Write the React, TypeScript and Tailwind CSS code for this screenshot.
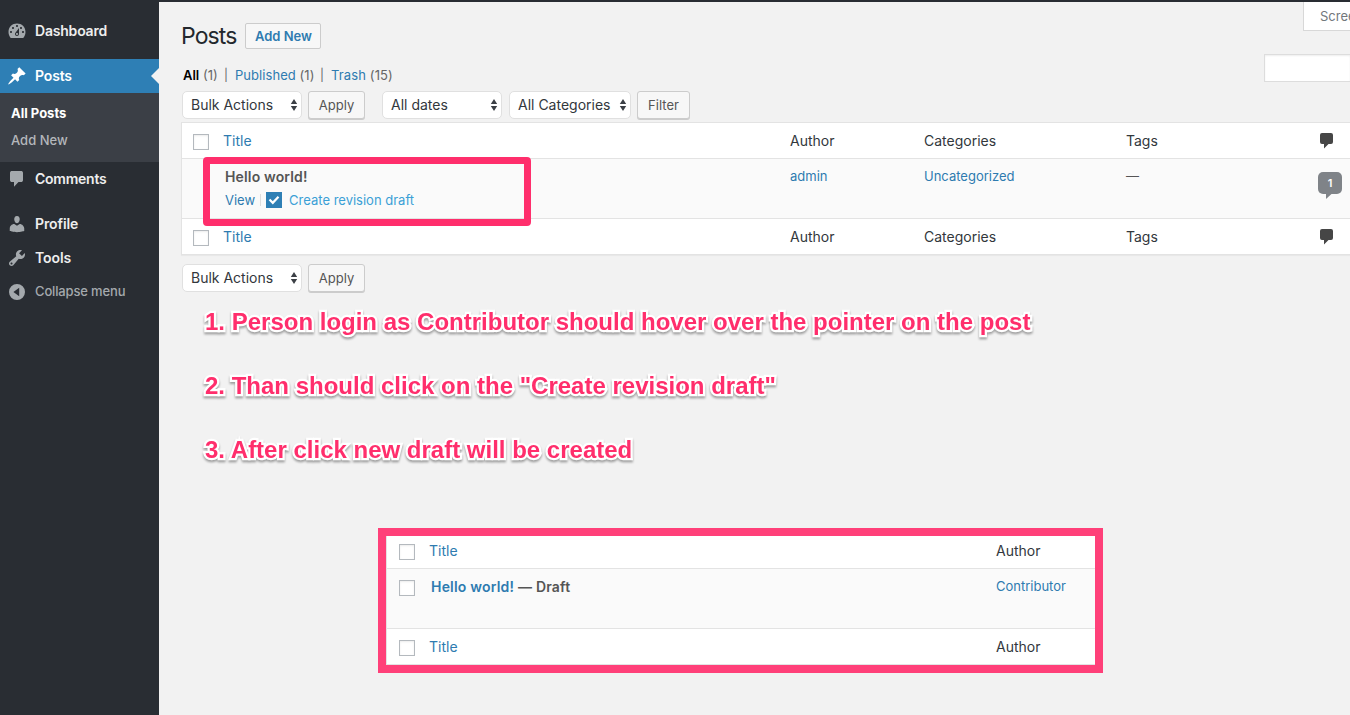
import React from "react";

const ICONS = {
  dashboard:
    "M3.76 17h12.48c1.34-1.54 2.26-3.56 2.26-6 0-5.2-3.8-8.5-8.5-8.5S1.5 5.8 1.5 11c0 2.44.92 4.46 2.26 6zM10 4c.55 0 1 .45 1 1s-.45 1-1 1-1-.45-1-1 .45-1 1-1zM6 6c.55 0 1 .45 1 1s-.45 1-1 1-1-.45-1-1 .45-1 1-1zm8 0c.55 0 1 .45 1 1s-.45 1-1 1-1-.45-1-1 .45-1 1-1zm-5.37 5.55L12 7v6c0 1.1-.9 2-2 2s-2-.9-2-2c0-.57.24-1.08.63-1.45zM4 10c.55 0 1 .45 1 1s-.45 1-1 1-1-.45-1-1 .45-1 1-1zm12 0c.55 0 1 .45 1 1s-.45 1-1 1-1-.45-1-1 .45-1 1-1zm-5 3c0-.55-.45-1-1-1s-1 .45-1 1 .45 1 1 1 1-.45 1-1z",
  pin: "M10.44 3.02l1.82-1.82 6.36 6.35-1.83 1.82c-1.05-.68-2.48-.57-3.41.36l-.75.75c-.92.93-1.04 2.35-.35 3.41l-1.83 1.82-2.41-2.41-2.8 2.79c-.42.42-3.38 2.71-3.8 2.29s1.86-3.39 2.28-3.81l2.79-2.79L4.1 9.36l1.83-1.82c1.05.69 2.48.57 3.4-.36l.75-.75c.93-.92 1.05-2.35.36-3.41z",
  comment: "M5 2h9c1.1 0 2 .6 2 2v7c0 1.4-.9 2-2 2h-2.500L7 17.800V13H5c-1.100 0-2-.6-2-2V4c0-1.400.9-2 2-2z",
  user: "M10 9.25c-2.27 0-2.73-3.44-2.73-3.44C7 4.02 7.82 2 9.97 2c2.16 0 2.98 2.02 2.71 3.81 0 0-.41 3.44-2.68 3.44zm0 2.57L12.72 10c2.39 0 4.52 2.33 4.52 4.53v2.49s-3.65 1.13-7.24 1.13c-3.65 0-7.24-1.13-7.24-1.13v-2.49c0-2.25 1.94-4.48 4.47-4.48z",
  wrench:
    "M16.68 9.77c-1.34 1.34-3.3 1.67-4.95.99l-5.41 6.52c-.99.99-2.59.99-3.58 0s-.99-2.59 0-3.57l6.52-5.42c-.68-1.65-.35-3.61.99-4.95 1.28-1.28 3.12-1.62 4.72-1.06l-2.89 2.89 2.82 2.82 2.86-2.87c.53 1.58.18 3.39-1.08 4.65zM3.81 16.21c.4.39 1.04.39 1.43 0 .4-.4.4-1.04 0-1.43-.39-.4-1.03-.4-1.43 0-.39.39-.39 1.03 0 1.43z",
  collapse: "M10 2a8 8 0 1 0 0 16 8 8 0 0 0 0-16zM12.200 5.800v8.400L6.400 10z",
};

function Icon({ d, className }: { d: string; className: string }) {
  return (
    <svg viewBox="0 0 20 20" className={className} fill="currentColor" fillRule="evenodd">
      <path d={d} />
    </svg>
  );
}

function MenuItem({ icon, label, className }: { icon: string; label: string; className: string }) {
  return (
    <div className={`flex h-[34px] items-center gap-2 pl-[7px] ${className}`}>
      <Icon d={icon} className="size-5 shrink-0" />
      <span className="pb-[2px]">{label}</span>
    </div>
  );
}

function Sidebar() {
  return (
    <aside className="w-[159px] shrink-0 bg-[#292d33] pt-[14px] text-[#a4a9ad]">
      <MenuItem icon={ICONS.dashboard} label="Dashboard" className="text-[14px] font-semibold tracking-[-0.2px] [&>span]:text-[#eee]" />
      <div className="relative mt-[11px] bg-[#2e7fb5] text-white">
        <MenuItem icon={ICONS.pin} label="Posts" className="text-[14px] font-semibold tracking-[-0.15px]" />
        <div className="absolute top-[9px] right-0 border-y-8 border-r-8 border-y-transparent border-r-[#f2f2f2]" />
      </div>
      <div className="flex h-[69px] flex-col bg-[#3b3f46] pt-[7px] pl-[11px] text-[13px] leading-[27px]">
        <span className="font-bold text-white">All Posts</span>
        <span className="font-medium text-[#b4b7bb]">Add New</span>
      </div>
      <MenuItem icon={ICONS.comment} label="Comments" className="text-[14px] font-semibold tracking-[-0.25px] [&>span]:text-[#eee]" />
      <MenuItem icon={ICONS.user} label="Profile" className="mt-[11px] text-[14px] font-semibold tracking-[-0.1px] [&>span]:text-[#eee]" />
      <MenuItem icon={ICONS.wrench} label="Tools" className="text-[14px] font-semibold tracking-[-0.1px] [&>span]:text-[#eee]" />
      <MenuItem icon={ICONS.collapse} label="Collapse menu" className="text-[13px] font-medium tracking-[-0.15px] [&>span]:pb-0" />
    </aside>
  );
}

function Select({ label, className }: { label: string; className: string }) {
  return (
    <div className={`flex h-7 items-center justify-between rounded-[5px] border border-[#e0e0e0] bg-white pr-[3px] pl-2 text-[14px] tracking-[0px] text-[#32373c] ${className}`}>
      <span className="pb-[2px]">{label}</span>
      <svg viewBox="0 0 8 14" className="h-3.5 w-2" fill="#3c4046">
        <path d="M4 1l3.200 5H.8zM4 13L.8 8h6.400z" />
      </svg>
    </div>
  );
}

function Button({ label, className }: { label: string; className: string }) {
  return (
    <div className={`flex h-7 items-center justify-center rounded-[3px] border border-[#ccc] bg-[#f7f7f7] pt-[2px] text-[13px] text-[#555] shadow-[0_1px_0_#ccc] ${className}`}>
      {label}
    </div>
  );
}

function Box() {
  return <span className="size-4 shrink-0 border border-[#b4b9be] bg-white shadow-[inset_0_1px_2px_rgba(0,0,0,0.08)]" />;
}

function Bubble() {
  return (
    <svg viewBox="0 0 13 16" className="h-4 w-[13px]" fill="#464646">
      <path d="M2 0h9q2 0 2 2v7q0 2-2 2H8.500L4 15.500V11H2Q0 11 0 9V2Q0 0 2 0z" />
    </svg>
  );
}

const COLS = "grid grid-cols-[41px_567px_134px_202px_194px_1fr]";

function HeadRow() {
  return (
    <div className={`${COLS} h-[35px] text-[14px] leading-[35px] text-[#32373c]`}>
      <div className="pt-[11px] pl-[11px]"><div className="flex"><Box /></div></div>
      <span className="text-[#2e7bb0]">Title</span>
      <span>Author</span>
      <span>Categories</span>
      <span>Tags</span>
      <div className="pt-[10px]"><Bubble /></div>
    </div>
  );
}

function PostsTable() {
  return (
    <section className="relative mt-[2px] border border-r-0 border-[#e3e3e3] bg-white shadow-[0_1px_1px_rgba(0,0,0,0.04)]">
      <HeadRow />
      <div className={`${COLS} h-[61px] border-y border-[#e3e3e3] bg-[#fafafa] text-[13px] leading-5 text-[#2e7bb0]`}>
        <span />
        <div className="pt-2 pl-[2px]">
          <div className="text-[14px] leading-5 font-semibold tracking-[0.15px] text-[#555]">Hello world!</div>
          <div className="mt-[3px] flex items-center">
            <span>View</span>
            <span className="ml-[5px] h-3 w-px bg-[#ddd]" />
            <span className="ml-[5px] flex size-4 items-center justify-center bg-[#2e7fb5]">
              <svg viewBox="0 0 16 16" className="size-4" fill="none" stroke="#fff" strokeWidth="2.2">
                <path d="M3.500 7.500l3.300 3.300 5.700-6" />
              </svg>
            </span>
            <span className="ml-[7px] text-[#3ba0d6]">Create revision draft</span>
          </div>
        </div>
        <span className="pt-[7px]">admin</span>
        <span className="pt-[7px]">Uncategorized</span>
        <span className="pt-[7px] text-[#555]">—</span>
        <div className="-ml-[2px] pt-[13px]">
          <div className="relative flex h-[22px] w-6 items-center justify-center rounded-[5px] bg-[#7f8388] text-[11px] font-semibold text-white">
            1
            <svg viewBox="0 0 6 5" className="absolute top-[22px] left-2 h-[5px] w-[6px]" fill="#7f8388">
              <path d="M0 0h5.500L0 5z" />
            </svg>
          </div>
        </div>
      </div>
      <HeadRow />
      <div className="absolute top-[34px] left-[21px] h-[69px] w-[328px] rounded-[4px] border-[7px] border-[#ff2e6c]" />
    </section>
  );
}

function DraftTable() {
  const cols = "grid grid-cols-[42px_567px_1fr]";
  const head = (
    <div className={`${cols} h-8 text-[14px] leading-[30px] text-[#32373c]`}>
      <div className="flex pt-2 pl-3"><Box /></div>
      <span className="text-[#2e7bb0]">Title</span>
      <span>Author</span>
    </div>
  );
  return (
    <section className="mt-[62px] ml-[197px] h-[145px] w-[725px] border-8 border-[#ff4079] bg-white">
      <div className="h-full border-b border-l border-[#e3e3e3]">
        {head}
        <div className={`${cols} h-[61px] border-y border-[#e3e3e3] bg-[#fafafa]`}>
          <div className="flex pt-[11px] pl-3"><Box /></div>
          <div className="pt-2 pl-[2px] text-[14px] leading-5 font-semibold tracking-[0.2px] text-[#555]">
            <span className="text-[#2e7bb0]">Hello world!</span> — Draft
          </div>
          <span className="pt-[7px] text-[13px] leading-5 text-[#2e7bb0]">Contributor</span>
        </div>
        <div className="pt-[3px]">{head}</div>
      </div>
    </section>
  );
}

function Notes() {
  return (
    <div className="mt-[13px] flex flex-col gap-8 pl-6 font-['Liberation_Sans',Arial,sans-serif] text-[24px] leading-8 font-bold whitespace-nowrap text-[#ff2e6c] drop-shadow-[0_2px_1px_rgba(0,0,0,0.35)] [-webkit-text-stroke:4.5px_white] [paint-order:stroke_fill] [stroke-linejoin:round]">
      <p>1. Person login as Contributor should hover over the pointer on the post</p>
      <p>2. Than should click on the "Create revision draft"</p>
      <p>3. After click new draft will be created</p>
    </div>
  );
}

export default function App() {
  return (
    <div className="flex h-[715px] w-[1350px] overflow-hidden bg-[#f2f2f2] font-[Inter,sans-serif]">
      <Sidebar />
      <main className="min-w-0 flex-1 border-t-2 border-[#292d33] pl-[22px]">
        <header className="flex h-[63px]">
          <h1 className="mt-[18px] text-[23px] leading-8 tracking-[-0.9px] text-[#23282d]">Posts</h1>
          <div className="mt-[21px] ml-[9px] flex h-[26px] w-[76px] items-center justify-center rounded-[2px] border border-[#ccc] bg-[#f7f7f7] pt-[2px] text-[13px] font-semibold text-[#2e7bb0]">
            Add New
          </div>
          <div className="ml-auto h-[29px] w-[47px] overflow-hidden border-b border-l border-[#d8d8d8] bg-white pl-4 text-[13px] leading-7 whitespace-nowrap text-[#72777c]">
            Screen Options
          </div>
        </header>
        <div className="flex justify-between">
          <div className="flex h-6 pl-[2px] text-[13px] leading-[21px] whitespace-pre text-[#666]">
            <span className="w-[41px]"><b className="font-semibold text-black">All</b> (1)</span>
            <span className="w-[11px] text-[12px] leading-[20px]">|</span>
            <span className="w-[85px] tracking-[0.05px]"><span className="text-[#2e7bb0]">Published</span> (1)</span>
            <span className="w-[11px] text-[12px] leading-[20px]">|</span>
            <span className="tracking-[0.12px]"><span className="text-[#2e7bb0]">Trash</span> (15)</span>
          </div>
          <div className="-mt-[11px] h-7 w-[86px] border border-r-0 border-[#ddd] bg-white shadow-[inset_0_1px_2px_rgba(0,0,0,0.07)]" />
        </div>
        <div className="mt-[2px] flex h-[29px] pl-px">
          <Select label="Bulk Actions" className="w-[120px]" />
          <Button label="Apply" className="ml-[6px] w-[57px]" />
          <Select label="All dates" className="ml-[17px] w-[120px]" />
          <Select label="All Categories" className="ml-[7px] w-[122px]" />
          <Button label="Filter" className="ml-[6px] w-[53px]" />
        </div>
        <PostsTable />
        <div className="mt-[9px] flex h-[29px] pl-px">
          <Select label="Bulk Actions" className="w-[120px]" />
          <Button label="Apply" className="ml-[6px] w-[57px]" />
        </div>
        <Notes />
        <DraftTable />
      </main>
    </div>
  );
}
